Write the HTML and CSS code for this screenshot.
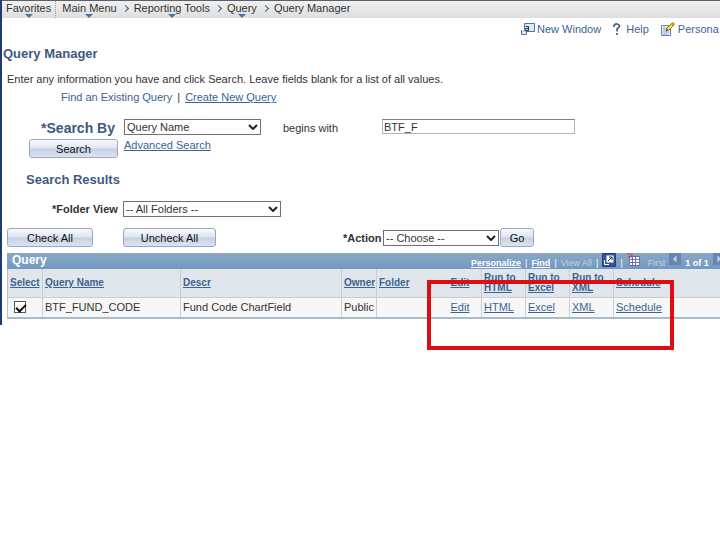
FILE: index.html
```
<!DOCTYPE html>
<html lang="en">
<head>
<meta charset="utf-8">
<title>Query Manager</title>
<link rel="stylesheet" href="styles.css">
</head>
<body>
<div class="page">
  <nav class="crumbs">
    <a class="crumb menu" href="#">Favorites</a>
    <span class="divider"></span>
    <a class="crumb menu" href="#">Main Menu</a>
    <span class="sep"></span>
    <a class="crumb menu" href="#">Reporting Tools</a>
    <span class="sep"></span>
    <a class="crumb menu" href="#">Query</a>
    <span class="sep"></span>
    <a class="crumb" href="#">Query Manager</a>
  </nav>

  <div class="tools">
    <a class="tool" href="#">
      <svg width="14" height="13" viewBox="0 0 14 13"><path d="M3.500.500h10v8h-10z" fill="#dfe9f3" stroke="#55759b"/><path d="M.5 7v4.500h5V9" fill="#e8eef5" stroke="#55759b"/><path d="M4.500 3.500h3v4h-3v-2h3" fill="none" stroke="#17345c"/><path d="M1.500 9.500l3-3" stroke="#8aa2bd"/></svg>
      New Window</a>
    <a class="tool help" href="#">
      <svg width="8" height="12" viewBox="0 0 8 12"><path d="M1 4V2.500L2.500 1h2L6.500 2.500v1L4 6v2.500M4 10v2" fill="none" stroke="#2b4a75" stroke-width="1.500"/></svg>
      Help</a>
    <a class="tool" href="#">
      <svg width="15" height="15" viewBox="0 0 15 15"><path d="M.5 3.500h9v10h-9z" fill="#e3ecfb" stroke="#6282b8"/><path d="M2 6h6M2 8h5M2 10h6M2 12h5" stroke="#8fa9d4"/><path d="M5 9l1-3 5-5 2 2-5 5z" fill="#f4d949" stroke="#9b7c20"/><path d="M10 2l2 2 2-2-2-2z" fill="#c8902e"/><path d="M5 9l1-2 1 1z" fill="#333"/></svg>
      Persona</a>
  </div>

  <h1>Query Manager</h1>
  <p class="intro">Enter any information you have and click Search. Leave fields blank for a list of all values.</p>
  <div class="modes"><a href="#">Find an Existing Query</a><span>|</span><a class="link" href="#">Create New Query</a></div>

  <form class="search">
    <label class="by" for="by">*Search By</label>
    <span class="pick"><select id="by"><option>Query Name</option></select><svg width="10" height="6" viewBox="0 0 10 6"><path d="M1 1l4 4 4-4" fill="none" stroke="#222" stroke-width="2"/></svg></span>
    <label class="op" for="term">begins with</label>
    <input class="term" id="term" type="text" value="BTF_F">
    <button class="btn go-search" type="button">Search</button>
    <a class="link advanced" href="#">Advanced Search</a>
  </form>

  <h2>Search Results</h2>
  <div class="folder">
    <label for="folder">*Folder View</label>
    <span class="pick"><select id="folder"><option>-- All Folders --</option></select><svg width="10" height="6" viewBox="0 0 10 6"><path d="M1 1l4 4 4-4" fill="none" stroke="#222" stroke-width="2"/></svg></span>
  </div>
  <div class="actions">
    <button class="btn check" type="button">Check All</button>
    <button class="btn uncheck" type="button">Uncheck All</button>
    <label for="action">*Action</label>
    <span class="pick"><select id="action"><option>-- Choose --</option></select><svg width="10" height="6" viewBox="0 0 10 6"><path d="M1 1l4 4 4-4" fill="none" stroke="#222" stroke-width="2"/></svg></span>
    <button class="btn go" type="button">Go</button>
  </div>

  <section class="results">
    <header class="bar">
      <h3>Query</h3>
      <div class="pager">
        <a href="#">Personalize</a><span>|</span><a href="#">Find</a><span>|</span><span class="off">View All</span><span>|</span>
        <svg width="14" height="14" viewBox="0 0 14 14"><path d="M.5.500h13v13H.5z" fill="#36549a" stroke="#233f80"/><path d="M4.500 2.500h7v7h-7z" fill="#fff"/><path d="M6 8l4-4M7 4h3v3" fill="none" stroke="#17306c"/><path d="M2.500 7v4.500H7" fill="none" stroke="#fff"/></svg>
        <span>|</span>
        <svg width="13" height="13" viewBox="0 0 13 13"><path d="M2 3h11v10H2z" fill="#6b6fae"/><path d="M3 4h2v2H3zM6 4h2v2H6zM9 4h3v2H9zM3 7h2v2H3zM6 7h2v2H6zM9 7h3v2H9zM3 10h2v2H3zM6 10h2v2H6zM9 10h3v2H9z" fill="#fff"/><path d="M0 1h3l2 2M5 0v4H1" fill="none" stroke="#c2405c"/></svg>
        <span class="off first">First</span>
        <svg width="12" height="12" viewBox="0 0 12 12"><path d="M0 0h12v12H0z" fill="#6586b0"/><path d="M7.500 2.500v7L4 6z" fill="#c4d5e7"/></svg>
        <strong>1 of 1</strong>
        <svg width="12" height="12" viewBox="0 0 12 12"><path d="M0 0h12v12H0z" fill="#6586b0"/><path d="M4.500 2.500v7L8 6z" fill="#c4d5e7"/></svg>
      </div>
    </header>
    <table>
      <colgroup><col class="c-select"><col class="c-name"><col class="c-descr"><col class="c-owner"><col class="c-folder"><col class="c-edit"><col class="c-run"><col class="c-run"><col class="c-run"><col></colgroup>
      <thead><tr>
        <th><a href="#">Select</a></th><th><a href="#">Query Name</a></th><th><a href="#">Descr</a></th><th><a href="#">Owner</a></th><th><a href="#">Folder</a></th><th><a href="#">Edit</a></th><th><a href="#">Run to HTML</a></th><th><a href="#">Run to Excel</a></th><th><a href="#">Run to XML</a></th><th><a href="#">Schedule</a></th>
      </tr></thead>
      <tbody><tr>
        <td><input type="checkbox" checked aria-label="Select BTF_FUND_CODE"></td><td>BTF_FUND_CODE</td><td>Fund Code ChartField</td><td>Public</td><td></td><td><a href="#">Edit</a></td><td><a href="#">HTML</a></td><td><a href="#">Excel</a></td><td><a href="#">XML</a></td><td><a href="#">Schedule</a></td>
      </tr></tbody>
    </table>
    <div class="highlight"></div>
  </section>
</div>
</body>
</html>
```
FILE: styles.css
```
* { box-sizing: border-box; }
body {
  min-height: 100vh;
  margin: 0;
  background: #fff;
  color: #333;
  font: 11px/14px "Liberation Sans", Arial, sans-serif;
  overflow-x: hidden;
}
a { color: #3a6391; text-decoration: none; white-space: nowrap; }
.link { text-decoration: underline; }
h1, h2, h3, p { margin: 0; }
h1, h2, .by { color: #3c5a80; font-weight: bold; }
svg { flex: none; }

.page { border-left: 2px solid #1d3b78; padding-bottom: 6px; }

.crumbs {
  display: flex;
  height: 18px;
  padding-left: 4px;
  border-top: 1px solid #59606e;
  background: linear-gradient(#f0f0f0, #dedede);
}
.crumb { position: relative; color: #333; }
.menu::after {
  content: "";
  position: absolute;
  top: 13px;
  left: 50%;
  margin-left: -4px;
  border: 4px solid transparent;
  border-top-color: #4774a6;
  border-bottom: 0;
}
.divider { width: 1px; margin: 0 6px 0 4px; border-left: 1px dotted #999; }
.sep { width: 17px; }
.sep::before {
  content: "";
  display: block;
  width: 4px;
  height: 4px;
  margin: 5px 0 0 6px;
  border: solid #4b5a72;
  border-width: 1px 1px 0 0;
  transform: rotate(45deg);
}

.tools { display: flex; gap: 12px; height: 28px; padding: 0 0 6px 519px; align-items: center; }
.tool { display: flex; align-items: center; gap: 2px; flex: none; line-height: 14px; }
.help { gap: 5px; }

h1 { padding-left: 1px; font-size: 13px; line-height: 16px; }
.intro { padding: 10px 0 0 5px; white-space: nowrap; }
.modes { display: flex; gap: 5px; padding: 4px 0 0 59px; }

.search {
  display: grid;
  grid-template-columns: 116px 137px 109px 193px;
  grid-template-rows: 20px 19px;
  column-gap: 6px;
  padding-top: 15px;
}
.by { font-size: 14px; line-height: 18px; text-align: right; padding-right: 3px; }
.op { line-height: 18px; padding-left: 16px; }
.term { height: 15px; padding: 0 1px; border: 1px solid #b5b5b5; border-top-color: #808080; font: inherit; color: #333; background: #fff; }
.advanced { line-height: 12px; }
.go-search { margin-left: 27px; }

.pick { position: relative; display: block; height: 16px; }
.pick select {
  display: block;
  width: 100%;
  height: 16px;
  padding: 0 2px;
  border: 1px solid #707070;
  border-radius: 0;
  background: #fff;
  color: #333;
  font: inherit;
  line-height: 14px;
  appearance: none;
}
.pick svg { position: absolute; right: 3px; top: 5px; pointer-events: none; }

.btn {
  height: 19px;
  padding: 0;
  border: 1px solid #9aa8bd;
  border-radius: 3px;
  background: linear-gradient(#f8fafc, #dfe6f1 45%, #c6d1e4 55%, #dce4f0);
  color: #111;
  font: inherit;
}

h2 { padding: 14px 0 0 24px; font-size: 13px; line-height: 16px; }
.folder { display: flex; gap: 6px; padding: 13px 0 0 50px; }
.folder label, .actions label { font-weight: bold; line-height: 16px; white-space: nowrap; }
.folder .pick { width: 158px; }
.folder label { width: 65px; }
.actions { display: flex; align-items: center; padding: 11px 0 0 5px; }
.check { width: 86px; }
.uncheck { width: 93px; margin: 0 127px 0 30px; }
.actions .pick { width: 116px; margin: 0 1px 0 3px; }
.actions label { width: 37px; }
.go { width: 34px; }

.results { position: relative; margin: 6px 0 0 5px; }
.bar {
  display: flex;
  height: 16px;
  padding-left: 5px;
  background: linear-gradient(#8ba8c4, #7399c2);
  color: #fff;
}
h3 { width: 459px; font-size: 12px; line-height: 15px; flex: none; }
.pager { display: flex; gap: 4px; flex: none; font-size: 9px; line-height: 20px; }
.pager a { color: #fff; font-weight: bold; text-decoration: underline; }
.off { color: #bfd1e3; }
.first { margin-left: 4px; }

table { width: 100%; table-layout: fixed; border-collapse: collapse; border-left: 1px solid #b4c3d0; border-bottom: 2px solid #abbbc7; }
.c-select { width: 35px; }
.c-name { width: 138px; }
.c-descr { width: 161px; }
.c-owner { width: 35px; }
.c-folder { width: 72px; }
.c-edit { width: 33px; }
.c-run { width: 44px; }
th, td { padding: 0 2px; border-right: 1px solid #c5cdd5; text-align: left; white-space: nowrap; }
th:nth-child(5), td:nth-child(5), th:last-child, td:last-child { border-right: 0; }
th { height: 28px; background: #e0e6ec; font-size: 10px; line-height: 10px; border-bottom: 1px solid #c9cdd1; }
th a { white-space: normal; }
td { height: 21px; background: #f7f7f7; }
table a { text-decoration: underline; }
td input {
  appearance: none;
  display: block;
  width: 12px;
  height: 12px;
  margin: 0 4px;
  border: 1px solid #555;
  background: #fff;
}
td input:checked::before {
  content: "";
  display: block;
  width: 8px;
  height: 4px;
  margin: 2px 1px;
  border: solid #111;
  border-width: 0 0 2px 2px;
  transform: rotate(-45deg);
}
.highlight {
  position: absolute;
  left: 420px;
  top: 27px;
  width: 247px;
  height: 70px;
  border: 4px solid #df0d12;
  pointer-events: none;
}
```
